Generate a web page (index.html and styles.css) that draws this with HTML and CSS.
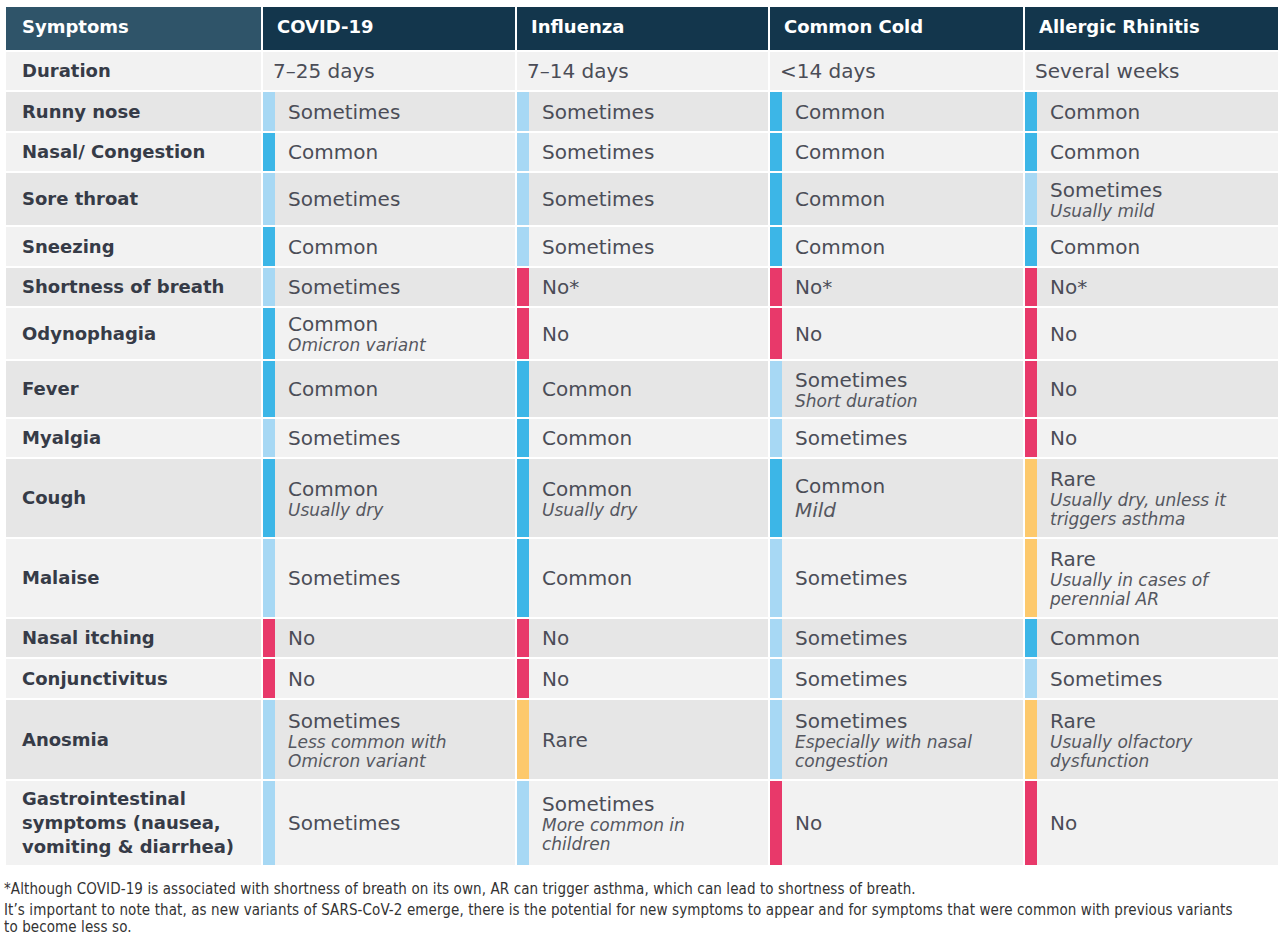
FILE: index.html
```html
<!DOCTYPE html>
<html lang="en">
<head>
<meta charset="utf-8">
<title>Symptoms comparison</title>
<link rel="stylesheet" href="styles.css">
</head>
<body>
<div class="page">
  <div class="table">
    <div class="hd hd-first">Symptoms</div>
    <div class="hd">COVID-19</div>
    <div class="hd">Influenza</div>
    <div class="hd">Common Cold</div>
    <div class="hd">Allergic Rhinitis</div>

    <div class="lbl lt">Duration</div>
    <div class="val lt plain"><div class="m">7–25 days</div></div>
    <div class="val lt plain"><div class="m">7–14 days</div></div>
    <div class="val lt plain"><div class="m">&lt;14 days</div></div>
    <div class="val lt plain"><div class="m">Several weeks</div></div>

    <div class="lbl dk">Runny nose</div>
    <div class="val dk s"><div class="m">Sometimes</div></div>
    <div class="val dk s"><div class="m">Sometimes</div></div>
    <div class="val dk c"><div class="m">Common</div></div>
    <div class="val dk c"><div class="m">Common</div></div>

    <div class="lbl lt">Nasal/ Congestion</div>
    <div class="val lt c"><div class="m">Common</div></div>
    <div class="val lt s"><div class="m">Sometimes</div></div>
    <div class="val lt c"><div class="m">Common</div></div>
    <div class="val lt c"><div class="m">Common</div></div>

    <div class="lbl dk">Sore throat</div>
    <div class="val dk s"><div class="m">Sometimes</div></div>
    <div class="val dk s"><div class="m">Sometimes</div></div>
    <div class="val dk c"><div class="m">Common</div></div>
    <div class="val dk s"><div class="m">Sometimes</div><div class="i">Usually mild</div></div>

    <div class="lbl lt">Sneezing</div>
    <div class="val lt c"><div class="m">Common</div></div>
    <div class="val lt s"><div class="m">Sometimes</div></div>
    <div class="val lt c"><div class="m">Common</div></div>
    <div class="val lt c"><div class="m">Common</div></div>

    <div class="lbl dk">Shortness of breath</div>
    <div class="val dk s"><div class="m">Sometimes</div></div>
    <div class="val dk n"><div class="m">No*</div></div>
    <div class="val dk n"><div class="m">No*</div></div>
    <div class="val dk n"><div class="m">No*</div></div>

    <div class="lbl lt">Odynophagia</div>
    <div class="val lt c"><div class="m">Common</div><div class="i">Omicron variant</div></div>
    <div class="val lt n"><div class="m">No</div></div>
    <div class="val lt n"><div class="m">No</div></div>
    <div class="val lt n"><div class="m">No</div></div>

    <div class="lbl dk">Fever</div>
    <div class="val dk c"><div class="m">Common</div></div>
    <div class="val dk c"><div class="m">Common</div></div>
    <div class="val dk s"><div class="m">Sometimes</div><div class="i">Short duration</div></div>
    <div class="val dk n"><div class="m">No</div></div>

    <div class="lbl lt">Myalgia</div>
    <div class="val lt s"><div class="m">Sometimes</div></div>
    <div class="val lt c"><div class="m">Common</div></div>
    <div class="val lt s"><div class="m">Sometimes</div></div>
    <div class="val lt n"><div class="m">No</div></div>

    <div class="lbl dk">Cough</div>
    <div class="val dk c"><div class="m">Common</div><div class="i">Usually dry</div></div>
    <div class="val dk c"><div class="m">Common</div><div class="i">Usually dry</div></div>
    <div class="val dk c"><div class="m">Common</div><div class="i big">Mild</div></div>
    <div class="val dk r"><div class="m">Rare</div><div class="i">Usually dry, unless it<br>triggers asthma</div></div>

    <div class="lbl lt">Malaise</div>
    <div class="val lt s"><div class="m">Sometimes</div></div>
    <div class="val lt c"><div class="m">Common</div></div>
    <div class="val lt s"><div class="m">Sometimes</div></div>
    <div class="val lt r"><div class="m">Rare</div><div class="i">Usually in cases of<br>perennial AR</div></div>

    <div class="lbl dk">Nasal itching</div>
    <div class="val dk n"><div class="m">No</div></div>
    <div class="val dk n"><div class="m">No</div></div>
    <div class="val dk s"><div class="m">Sometimes</div></div>
    <div class="val dk c"><div class="m">Common</div></div>

    <div class="lbl lt">Conjunctivitus</div>
    <div class="val lt n"><div class="m">No</div></div>
    <div class="val lt n"><div class="m">No</div></div>
    <div class="val lt s"><div class="m">Sometimes</div></div>
    <div class="val lt s"><div class="m">Sometimes</div></div>

    <div class="lbl dk">Anosmia</div>
    <div class="val dk s"><div class="m">Sometimes</div><div class="i">Less common with<br>Omicron variant</div></div>
    <div class="val dk r"><div class="m">Rare</div></div>
    <div class="val dk s"><div class="m">Sometimes</div><div class="i">Especially with nasal<br>congestion</div></div>
    <div class="val dk r"><div class="m">Rare</div><div class="i">Usually olfactory<br>dysfunction</div></div>

    <div class="lbl lt">Gastrointestinal<br>symptoms (nausea,<br>vomiting &amp; diarrhea)</div>
    <div class="val lt s"><div class="m">Sometimes</div></div>
    <div class="val lt s"><div class="m">Sometimes</div><div class="i">More common in<br>children</div></div>
    <div class="val lt n"><div class="m">No</div></div>
    <div class="val lt n"><div class="m">No</div></div>
  </div>

  <div class="notes">
    <p class="note note1">*Although COVID-19 is associated with shortness of breath on its own, AR can trigger asthma, which can lead to shortness of breath.</p>
    <p class="note">It’s important to note that, as new variants of SARS-CoV-2 emerge, there is the potential for new symptoms to appear and for symptoms that were common with previous variants to become less so.</p>
  </div>
</div>
</body>
</html>
```

FILE: styles.css
```css
html, body {
  margin: 0;
  padding: 0;
  background: #ffffff;
}

.page {
  width: 1286px;
  height: 943px;
  padding: 7px 0 0 6px;
  box-sizing: border-box;
  font-family: "DejaVu Sans", "Open Sans", sans-serif;
}

.table {
  display: grid;
  grid-template-columns: 255px 252px 251px 253px 253px;
  grid-template-rows: 43px 38px 39px 38px 52px 39px 38px 51px 56px 38px 78px 78px 38px 39px 79px 84px;
  column-gap: 2px;
  row-gap: 2px;
  width: 1272px;
}

.hd {
  background: #13364c;
  color: #ffffff;
  font-weight: 700;
  font-size: 18px;
  display: flex;
  align-items: center;
  padding: 0 14px 4px 14px;
  white-space: nowrap;
}

.hd-first {
  background: #2f5469;
  padding-left: 16px;
}

.lt { background: #f2f2f2; }
.dk { background: #e6e6e6; }

.lbl {
  display: flex;
  align-items: center;
  padding-left: 16px;
  font-weight: 700;
  font-size: 18px;
  color: #363b47;
  line-height: 24px;
  white-space: nowrap;
}

.val {
  display: flex;
  flex-direction: column;
  justify-content: center;
  padding-left: 13px;
  color: #4b4d57;
  border-left: 12px solid transparent;
  white-space: nowrap;
}

.val.plain {
  border-left: 0;
  padding-left: 10px;
}

.val.s { border-left-color: #a7d8f4; }
.val.c { border-left-color: #3cb6e7; }
.val.n { border-left-color: #e8396a; }
.val.r { border-left-color: #fdc96c; }

.m {
  font-size: 20px;
  line-height: 24px;
}

.i {
  font-style: italic;
  font-size: 17px;
  line-height: 19px;
  color: #55575f;
}

.i.big {
  font-size: 20px;
  line-height: 24px;
}

.notes {
  padding: 16px 0 0 0;
  margin-left: -2px;
  width: 1240px;
  font-family: "DejaVu Sans Condensed", "DejaVu Sans", sans-serif;
  font-stretch: condensed;
  font-size: 15px;
  letter-spacing: 0.1px;
  color: #333333;
}

.note {
  margin: 0;
  line-height: 17px;
}

.note1 {
  margin-bottom: 4px;
}
```
